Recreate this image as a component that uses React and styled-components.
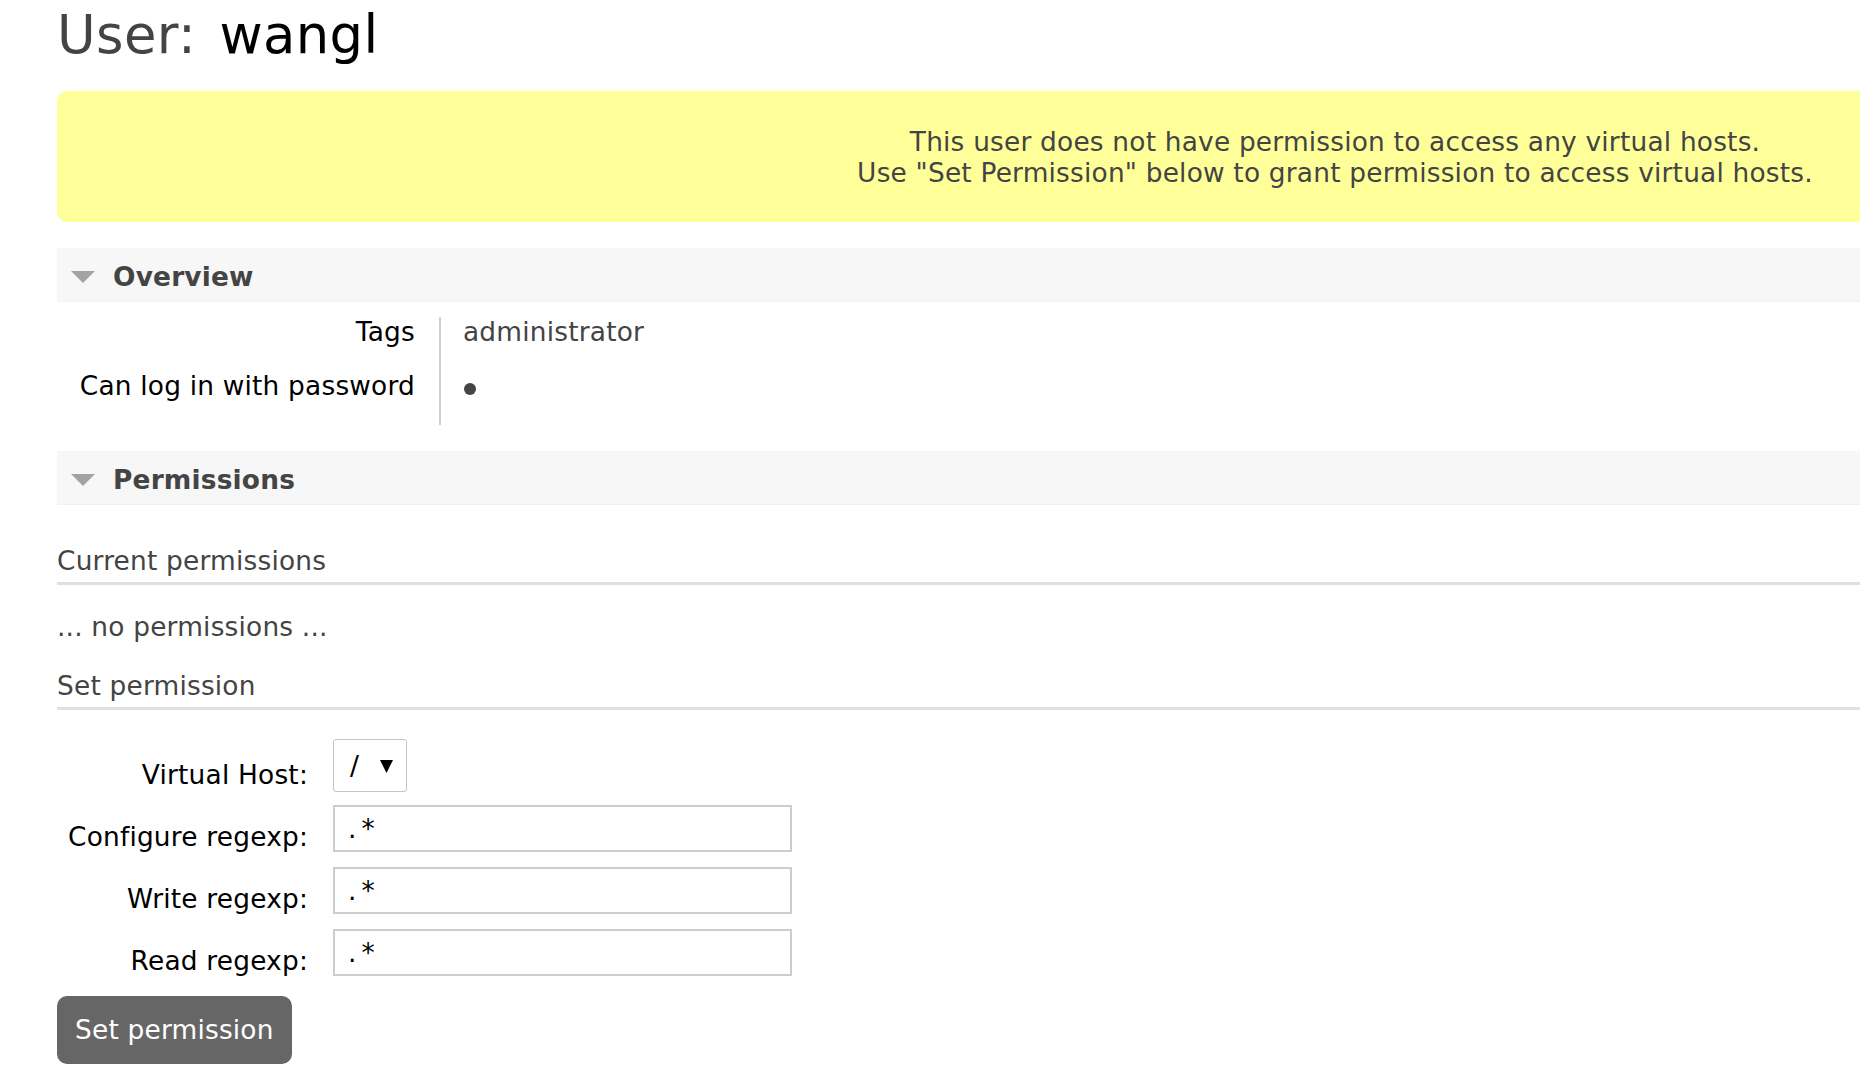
import React from "react";
import styled, { createGlobalStyle } from "styled-components";

const GlobalStyle = createGlobalStyle`
  body {
    margin: 0;
    overflow: hidden;
    background: #fff;
    font-family: "DejaVu Sans", Verdana, sans-serif;
    font-size: 26.4px;
    letter-spacing: 0.2px;
    color: #444;
  }
`;

const Page = styled.div`
  padding-left: 57px;
  width: 2556px;
`;

const Title = styled.h1`
  margin: 4px 0 0;
  font-size: 52.8px;
  line-height: 62px;
  font-weight: normal;
  letter-spacing: 0.4px;
  color: #444;
`;

const Name = styled.span`
  color: #000;
  margin-left: 6px;
`;

const Warning = styled.div`
  margin-top: 25px;
  padding: 35px 0 34px;
  border-radius: 10px;
  background: #ffff99;
  text-align: center;
  line-height: 31px;
  color: #444;
`;

const Section = styled.section`
  margin-top: 26px;
`;

const SectionHeader = styled.div`
  display: flex;
  align-items: flex-start;
  box-sizing: border-box;
  height: 54px;
  padding-top: 4px;
  background: #f7f7f7;
  border-bottom: 1px solid #f1f1f1;
`;

const Arrow = styled.svg`
  margin: 19px 0 0 14px;
  flex: none;
`;

const SectionTitle = styled.h2`
  margin: 0 0 0 18px;
  font-size: 26.4px;
  line-height: 50px;
  font-weight: bold;
  color: #444;
`;

const Facts = styled.div`
  display: grid;
  grid-template-columns: 384px 1fr;
  margin-top: 15px;
  line-height: 30px;
`;

const Key = styled.div`
  box-sizing: border-box;
  text-align: right;
  padding: 0 24px 24px 0;
  border-right: 2px solid #d0d0d0;
  color: #000;
`;

const Value = styled.div`
  padding: 0 0 24px 22px;
  color: #444;
`;

const Dot = styled.span`
  display: inline-block;
  width: 12px;
  height: 12px;
  margin-left: 1px;
  border-radius: 50%;
  background: #444;
`;

const SubTitle = styled.h3`
  margin: ${(p) => p.$top}px 0 0;
  padding-bottom: 6px;
  border-bottom: 3px solid #e0e0e0;
  font-size: 26.4px;
  line-height: 30px;
  font-weight: normal;
  color: #444;
`;

const Note = styled.p`
  margin: 27px 0 0;
  line-height: 30px;
`;

const Form = styled.div`
  display: grid;
  grid-template-columns: 251px auto;
  column-gap: 25px;
  row-gap: 15px;
  justify-items: start;
  margin-top: 29px;
`;

const Label = styled.label`
  justify-self: end;
  padding-top: ${(p) => p.$top}px;
  line-height: 30px;
  color: #000;
`;

const Select = styled.div`
  display: flex;
  align-items: center;
  box-sizing: border-box;
  width: 74px;
  height: 53px;
  margin-bottom: -3px;
  padding-left: 16px;
  border: 1px solid #c4c4c4;
  border-radius: 3px;
  background: #fff;
  color: #000;
`;

const Caret = styled.svg`
  margin-left: 21px;
  margin-top: 2px;
`;

const Input = styled.input`
  box-sizing: border-box;
  width: 459px;
  height: 47px;
  padding: 0 13px;
  border: 2px solid #cdcdcd;
  border-radius: 0;
  font-family: "DejaVu Sans", Verdana, sans-serif;
  font-size: 26.4px;
  letter-spacing: 5px;
  color: #000;
  outline: none;
`;

const Button = styled.button`
  margin-top: 20px;
  height: 68px;
  padding: 0 18px;
  border: none;
  border-radius: 10px;
  background: #666;
  color: #fff;
  font-family: "DejaVu Sans", Verdana, sans-serif;
  font-size: 26.4px;
  letter-spacing: 0.2px;
  line-height: 30px;
  cursor: pointer;
`;

const Toggle = () => (
  <Arrow width="24" height="12" viewBox="0 0 24 12">
    <polygon points="0,0 24,0 12,12" fill="#a3a3a3" />
  </Arrow>
);

const regexps = ["Configure regexp:", "Write regexp:", "Read regexp:"];

export default function App() {
  return (
    <>
      <GlobalStyle />
      <Page>
        <Title>
          User: <Name>wangl</Name>
        </Title>

        <Warning>
          This user does not have permission to access any virtual hosts.
          <br />
          Use "Set Permission" below to grant permission to access virtual
          hosts.
        </Warning>

        <Section>
          <SectionHeader>
            <Toggle />
            <SectionTitle>Overview</SectionTitle>
          </SectionHeader>
          <Facts>
            <Key>Tags</Key>
            <Value>administrator</Value>
            <Key>Can log in with password</Key>
            <Value>
              <Dot />
            </Value>
          </Facts>
        </Section>

        <Section>
          <SectionHeader>
            <Toggle />
            <SectionTitle>Permissions</SectionTitle>
          </SectionHeader>
          <SubTitle $top={41}>Current permissions</SubTitle>
          <Note>... no permissions ...</Note>
          <SubTitle $top={29}>Set permission</SubTitle>
          <Form>
            <Label $top={21}>Virtual Host:</Label>
            <Select>
              <span>/</span>
              <Caret width="13" height="13" viewBox="0 0 13 13">
                <polygon points="0,0 13,0 6.5,13" fill="#000" />
              </Caret>
            </Select>
            {regexps.map((label) => (
              <React.Fragment key={label}>
                <Label $top={17}>{label}</Label>
                <Input defaultValue=".*" />
              </React.Fragment>
            ))}
          </Form>
          <Button>Set permission</Button>
        </Section>
      </Page>
    </>
  );
}
